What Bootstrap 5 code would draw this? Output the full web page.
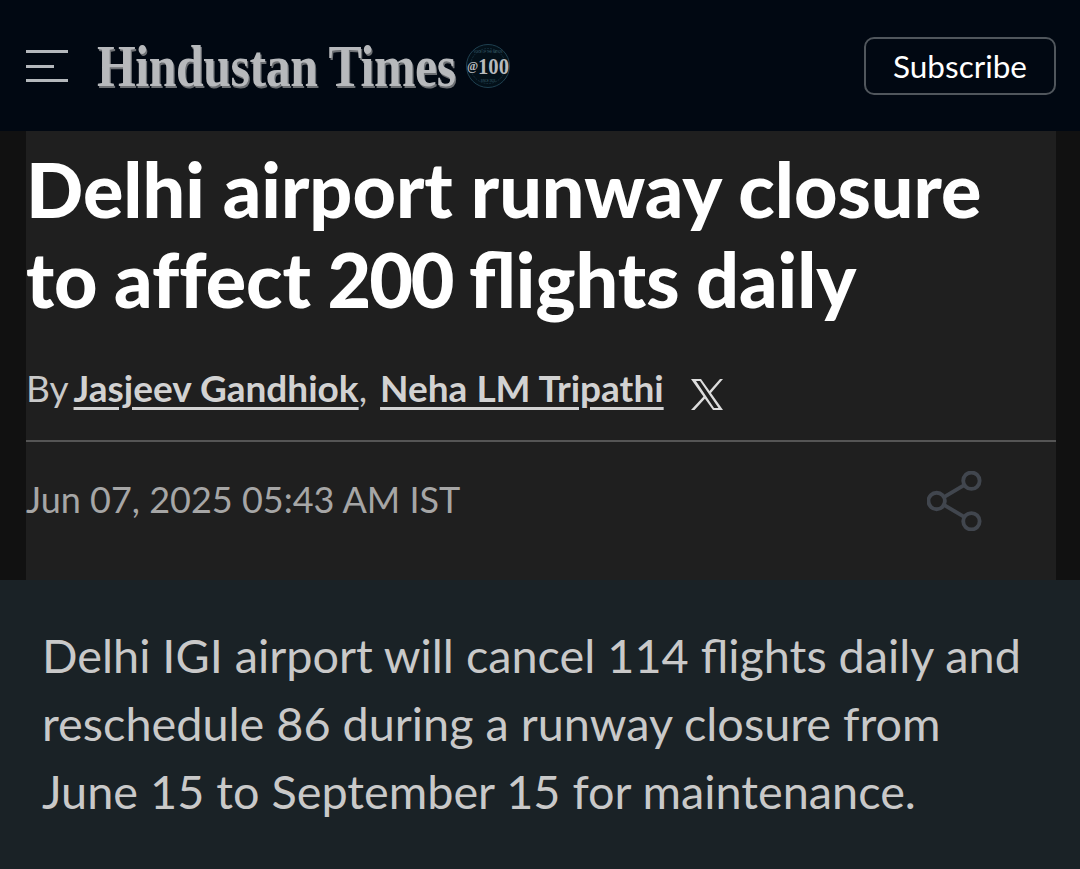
<!DOCTYPE html>
<html lang="en">
<head>
<meta charset="utf-8">
<title>Delhi airport runway closure</title>
<link href="https://cdn.jsdelivr.net/npm/bootstrap@5.3.0/dist/css/bootstrap.min.css" rel="stylesheet">
<style>
html,body{height:100%;}
body{background:#1a2226;font-family:Lato,"Liberation Sans",sans-serif;overflow:hidden;}
.ht-head{height:131px;background:#010812;padding:0 24px 0 26px;}
.ht-burger{width:42px;height:32px;margin-right:29px;}
.ht-logo-box{width:362px;height:50px;}
.ht-logo{display:inline-block;font-family:"Liberation Serif",serif;font-weight:700;font-size:60px;line-height:50px;color:#b7b9bc;white-space:nowrap;text-shadow:1.500px 1.500px 0 #6d7074;transform:scaleX(.83);transform-origin:left center;letter-spacing:-.5px;}
.ht-seal{width:46px;height:46px;margin-left:6px;}
.ht-sub{width:192px;height:58px;border:2px solid #50565c;border-radius:10px;color:#fff;font-size:31.500px;padding:0;background:transparent;line-height:54px;}
.ht-gutter{background:#111;height:449px;padding:0 24px 0 26px;}
.ht-panel{background:#1f1f1f;height:100%;}
.ht-title{font-size:75.400px;line-height:90px;font-weight:900;color:#fff;margin:0;padding-top:13px;}
.ht-line2{word-spacing:-1.500px;}
.ht-digits{letter-spacing:-2px;}
.ht-noliga{font-variant-ligatures:none;}
.ht-by{font-size:37px;line-height:44px;color:#c9c9c9;margin-top:35px;padding-top:7px;height:83px;border-bottom:2px solid #555;}
.ht-by a{color:#d2d2d2;font-weight:700;text-decoration-thickness:3px;text-underline-offset:5px;}
.ht-by-label{margin-right:5px;}
.ht-neha{margin-left:13px;}
.ht-x{width:32px;height:33px;margin-left:27px;margin-top:12px;}
.ht-date{font-size:36px;line-height:44px;color:#a6a6a6;margin-top:35px;}
.ht-share{width:56px;height:60px;margin-right:73px;margin-top:29px;}
.ht-sum{padding:41px 30px 0 42px;font-size:46.800px;line-height:68px;color:#c9c9c9;}
</style>
</head>
<body>
<header class="ht-head d-flex align-items-center">
  <svg class="ht-burger flex-shrink-0" viewBox="0 0 42 32" aria-hidden="true"><g fill="#b4b8bc"><rect x="0" y="0" width="42" height="3"/><rect x="0" y="15" width="28" height="3"/><rect x="0" y="29" width="42" height="3"/></g></svg>
  <div class="ht-logo-box flex-shrink-0"><span class="ht-logo">Hindustan Times</span></div>
  <svg class="ht-seal flex-shrink-0" viewBox="0 0 46 46" aria-hidden="true">
    <circle cx="23" cy="23" r="21.500" fill="#031019" stroke="#1f4050" stroke-width="1"/>
    <circle cx="23" cy="23" r="17.500" fill="none" stroke="#1f4050" stroke-width=".6" stroke-dasharray="2 1"/>
    <text x="23" y="10" text-anchor="middle" font-family="Liberation Sans" font-size="2.600" fill="#3d6474">VOICE OF THE NATION</text>
    <text x="23" y="39" text-anchor="middle" font-family="Liberation Sans" font-size="2.600" fill="#3d6474">SINCE 1924</text>
    <text x="2" y="27" font-family="Liberation Serif" font-weight="700" font-size="12" fill="#b7b9bc">@</text>
    <text x="13" y="31" font-family="Liberation Serif" font-weight="700" font-size="23" fill="#b7b9bc" textLength="31" lengthAdjust="spacingAndGlyphs">100</text>
  </svg>
  <button type="button" class="btn ht-sub ms-auto">Subscribe</button>
</header>
<section class="ht-gutter">
  <div class="ht-panel">
    <h1 class="ht-title">Delhi airport runway closure<br><span class="ht-line2">to <span class="ht-noliga">affect</span> <span class="ht-digits">200</span> flights daily</span></h1>
    <div class="ht-by d-flex align-items-start">
      <span class="ht-by-label">By</span><a href="#">Jasjeev Gandhiok</a><span>,</span><a class="ht-neha" href="#">Neha LM Tripathi</a>
      <svg class="ht-x" viewBox="0 0 32 33" aria-hidden="true"><path d="M0 1h10l22 31H22zM5 3l18 27h4.500L9 3z" fill="#dcdcdc" fill-rule="evenodd"/><path d="M29 1 18 13.500l1.500 2L32 1zM13 18 0 32h3.500l11-12z" fill="#dcdcdc"/></svg>
    </div>
    <div class="d-flex justify-content-between align-items-start">
      <div class="ht-date">Jun 07, 2025 05:43 AM IST</div>
      <svg class="ht-share" viewBox="0 0 58 62" aria-hidden="true"><g fill="none" stroke="#41464e" stroke-width="4"><circle cx="46" cy="10" r="8.500"/><circle cx="10" cy="31" r="8.500"/><circle cx="46" cy="52" r="8.500"/><path d="M17.500 27 38.500 14.500M17.500 35 38.500 47.500"/></g></svg>
    </div>
  </div>
</section>
<section class="ht-sum">Delhi IGI airport will cancel 114 flights daily and<br>reschedule 86 during a runway closure from<br>June 15 to September 15 for maintenance.</section>
</body>
</html>
